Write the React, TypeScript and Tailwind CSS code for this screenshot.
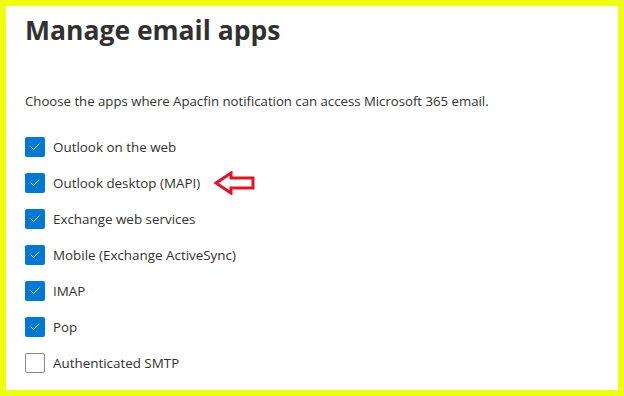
import { Check } from 'lucide-react';

const apps = [
  { label: 'Outlook on the web', checked: true },
  { label: 'Outlook desktop (MAPI)', checked: true, flagged: true },
  { label: 'Exchange web services', checked: true },
  { label: 'Mobile (Exchange ActiveSync)', checked: true },
  { label: 'IMAP', checked: true },
  { label: 'Pop', checked: true },
  { label: 'Authenticated SMTP', checked: false },
];

function Arrow() {
  return (
    <svg width="42" height="24" viewBox="0 0 42 24" className="ml-[14px]">
      <path
        d="M2 12 L17 2 L17 7 L39 7 L39 17 L17 17 L17 22 Z"
        fill="white"
        stroke="#e81123"
        strokeWidth="3"
        strokeLinejoin="miter"
      />
    </svg>
  );
}

export default function App() {
  return (
    <div className="w-[624px] h-[396px] bg-[#eeff11] p-[6px]">
      <div className="h-full bg-white pl-[19px] pt-[4px] font-['Segoe_UI','Open_Sans',sans-serif] text-[#323130]">
        <h1 className="text-[26.5px] font-bold leading-[40px]">Manage email apps</h1>

        <p className="mt-[41px] text-[13.2px] leading-[20px]">
          Choose the apps where Apacfin notification can access Microsoft 365 email.
        </p>

        <div className="mt-[26px] flex flex-col gap-[16px]">
          {apps.map((app) => (
            <label key={app.label} className="flex items-center h-[20px]">
              <span
                className={`w-[20px] h-[20px] rounded-[2px] flex items-center justify-center ${
                  app.checked ? 'bg-[#0078d4]' : 'border border-[#8a8886] bg-white'
                }`}
              >
                {app.checked && <Check size={12} strokeWidth={1.75} className="text-white" />}
              </span>
              <span className="ml-[8px] text-[13.4px] leading-[20px]">{app.label}</span>
              {app.flagged && <Arrow />}
            </label>
          ))}
        </div>
      </div>
    </div>
  );
}
